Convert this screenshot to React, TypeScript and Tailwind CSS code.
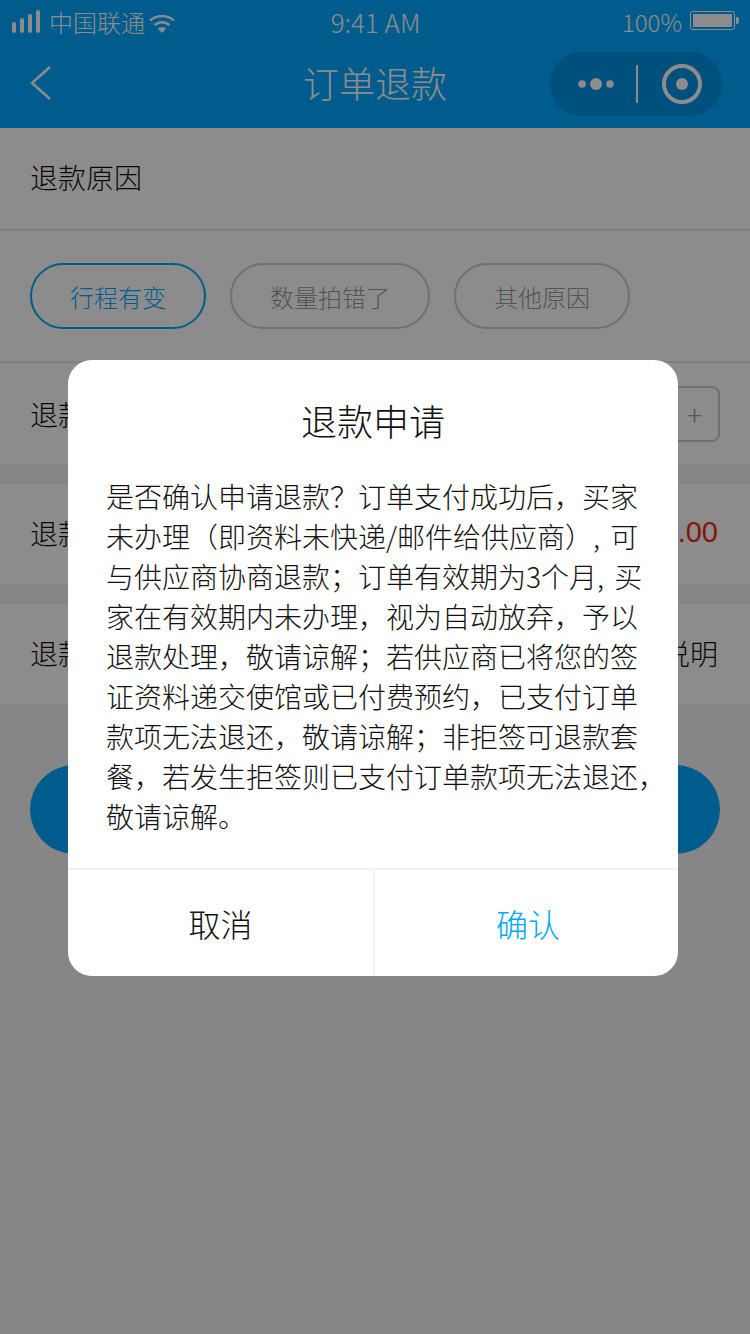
import React from "react"

const FONT = "font-['Noto_Sans_CJK_SC','Noto_Sans',sans-serif]"

// full-width punctuation written as escapes so it stays full-width
const lines = [
  "是否确认申请退款\uFF1F订单支付成功后\uFF0C买家",
  "未办理\uFF08即资料未快递/邮件给供应商\uFF09, 可",
  "与供应商协商退款\uFF1B订单有效期为3个月, 买",
  "家在有效期内未办理\uFF0C视为自动放弃\uFF0C予以",
  "退款处理\uFF0C敬请谅解\uFF1B若供应商已将您的签",
  "证资料递交使馆或已付费预约\uFF0C已支付订单",
  "款项无法退还\uFF0C敬请谅解\uFF1B非拒签可退款套",
  "餐\uFF0C若发生拒签则已支付订单款项无法退还\uFF0C",
  "敬请谅解\u3002",
]

function StatusBar() {
  return (
    <div className="flex h-10 items-start justify-between pt-2.5 pl-3 pr-[11px] leading-none text-white">
      <div className="flex w-[230px] items-start">
        <svg width="28" height="23" viewBox="0 0 28 23" fill="white">
          <rect x="0" y="12" width="4" height="11" rx="2" />
          <rect x="8" y="8" width="4" height="15" rx="2" />
          <rect x="16" y="4" width="4" height="19" rx="2" />
          <rect x="24" y="0" width="4" height="23" rx="2" />
        </svg>
        <span className="ml-[9px] -mt-0.5 text-[24px] leading-7 font-light">中国联通</span>
        <svg width="26" height="18" viewBox="0 0 26 18" fill="none" stroke="white" strokeWidth="2.4" className="mt-[5px] ml-[4px]">
          <path d="M1 5.500C8 -0.500 18 -0.500 25 5.500" />
          <path d="M5.500 10C10 6.300 16 6.300 20.500 10" />
          <path d="M13 18L8.800 13.500C11 11.800 15 11.800 17.200 13.500Z" fill="white" stroke="none" />
        </svg>
      </div>
      <span className="-mt-0.5 text-[26px] leading-7 font-light">9:41 AM</span>
      <div className="flex w-[230px] items-start justify-end">
        <span className="mr-2 -mt-0.5 text-[24px] leading-7 font-light">100%</span>
        <div className="mt-px flex items-center gap-px">
          <div className="h-[19px] w-[45px] rounded-[3px] border border-white p-[2px]">
            <div className="h-full w-full rounded-[1px] bg-white" />
          </div>
          <div className="h-[7px] w-[3px] rounded-r-[2px] bg-white" />
        </div>
      </div>
    </div>
  )
}

function NavBar() {
  return (
    <div className="relative flex h-[88px] items-center justify-between pl-[30px] pr-7">
      <svg width="21" height="36" viewBox="0 0 21 36" fill="none" stroke="white" strokeWidth="2.500" className="-mt-[3px]">
        <path d="M20 2L2 18L20 34" />
      </svg>
      <span className="absolute inset-x-0 top-[18px] text-center text-[36px] leading-[48px] font-light text-white">订单退款</span>
      <div className="flex h-16 w-[172px] items-center rounded-full bg-[#0092e6] pl-7">
        <svg width="36" height="14" viewBox="0 0 36 14" fill="white">
          <circle cx="4" cy="7" r="3.800" />
          <circle cx="18" cy="7" r="6" />
          <circle cx="32" cy="7" r="3.800" />
        </svg>
        <div className="ml-[22px] h-[38px] w-0.5 bg-white" />
        <div className="ml-6 flex h-10 w-10 items-center justify-center rounded-full border-[4px] border-white">
          <div className="h-3 w-3 rounded-full bg-white" />
        </div>
      </div>
    </div>
  )
}

function Chip({ label, active, width }: { label: string; active?: boolean; width: string }) {
  return (
    <div
      className={`flex h-[66px] items-center justify-center rounded-full border-2 pt-0.5 text-[24px] font-light ${width} ${
        active ? "border-[#00a8ff] text-[#00a8ff]" : "border-[#cccccc] text-[#999999]"
      }`}
    >
      {label}
    </div>
  )
}

function Row({ label, right, className }: { label: string; right: React.ReactNode; className: string }) {
  return (
    <div className={`flex items-center justify-between bg-white pl-[30px] ${className}`}>
      <span className="text-[28px] leading-10 font-light text-[#111111]">{label}</span>
      {right}
    </div>
  )
}

export default function App() {
  return (
    <div className={`relative h-[1334px] w-[750px] overflow-hidden bg-[#f4f4f4] ${FONT}`}>
      <div className="h-32 bg-[#00a8ff]">
        <StatusBar />
        <NavBar />
      </div>

      <div className="flex h-[103px] items-center border-b-2 border-[#e8e8e8] bg-white pb-[3px] pl-[30px] text-[28px] font-light text-[#111111]">
        退款原因
      </div>
      <div className="flex h-[132px] items-center gap-6 border-b-2 border-[#e8e8e8] bg-white pl-[30px]">
        <Chip label="行程有变" active width="w-[176px]" />
        <Chip label="数量拍错了" width="w-[200px]" />
        <Chip label="其他原因" width="w-[176px]" />
      </div>

      <Row
        label="退款数量"
        className="mb-5 h-[101px] pr-[30px]"
        right={
          <div className="flex h-14 w-[120px] items-center justify-between rounded-lg border-2 border-[#cccccc] px-4 text-[28px] text-[#999999]">
            <span>-</span>
            <span>1</span>
            <span className="font-light">+</span>
          </div>
        }
      />
      <Row
        label="退款金额"
        className="mb-5 h-[100px] pb-0.5 pr-8"
        right={<span className="font-['Liberation_Sans',sans-serif] text-[29px] text-[#f02a14]">¥100.00</span>}
      />
      <Row
        label="退款说明"
        className="h-[100px] pb-0.5 pr-8"
        right={<span className="text-[28px] font-light text-[#111111]">查看说明</span>}
      />

      <div className="mx-[30px] mt-[61px] flex h-[89px] items-center justify-center rounded-full bg-[#00a8ff] text-[32px] text-white">
        提交申请
      </div>

      <div className="absolute inset-0 bg-black/45" />

      <div className="absolute left-[68px] top-[360px] h-[616px] w-[610px] overflow-hidden rounded-3xl bg-white">
        <div className="pt-[35px] text-center text-[36px] leading-[50px] font-light text-[#111111]">退款申请</div>
        <div className="mt-[31px] h-[392px] pl-[38px] text-[28px] leading-10 font-light whitespace-nowrap text-[#111111] [word-spacing:4px]">
          {lines.map((e, i) => (
            <div key={i}>{e}</div>
          ))}
        </div>
        <div className="flex h-[108px] border-t-2 border-[#f2f2f2] text-[32px] font-light">
          <div className="flex w-[307px] items-center justify-center border-r-2 border-[#f2f2f2] text-[#111111]">取消</div>
          <div className="flex flex-1 items-center justify-center pl-[3px] text-[#00a8ff]">确认</div>
        </div>
      </div>
    </div>
  )
}
